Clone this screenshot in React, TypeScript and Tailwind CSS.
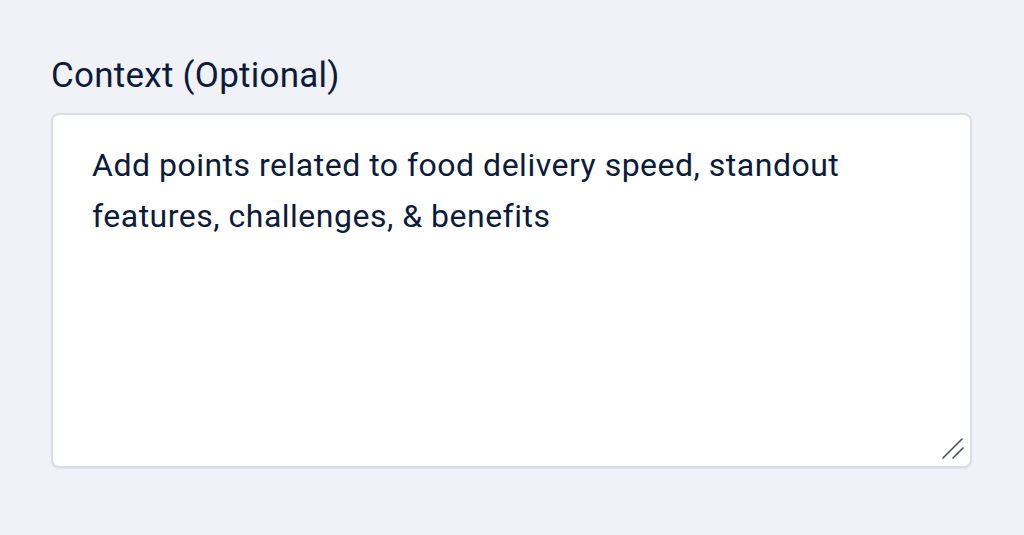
export default function App() {
  return (
    <div className="min-h-[535px] w-full bg-[#f1f2f8] px-[51px] pt-[56px] font-['Roboto',sans-serif]">
      <label
        htmlFor="context"
        className="block text-[35px] leading-[40px] font-normal tracking-[0.25px] text-[#0c1b3a]"
      >
        Context (Optional)
      </label>
      <div className="relative mt-[17px] w-[921px]">
        <textarea
          id="context"
          defaultValue="Add points related to food delivery speed, standout features, challenges, & benefits"
          className="block h-[355px] w-full resize-none rounded-[8px] border-2 border-[#dcdde3] bg-white pl-[39px] pr-[39px] pt-[25px] text-[32px] leading-[51px] tracking-[0.5px] text-[#0c1b3a] shadow-[0_1px_2px_rgba(0,0,0,0.06)] outline-none font-['Roboto',sans-serif]"
        />
        <svg
          className="pointer-events-none absolute right-[8px] bottom-[8px]"
          width="24"
          height="24"
          viewBox="0 0 24 24"
          fill="none"
          stroke="#4b4d55"
          strokeWidth="1.6"
          strokeLinecap="round"
        >
          <line x1="3" y1="22" x2="22" y2="3" />
          <line x1="13" y1="22" x2="23" y2="12" />
        </svg>
      </div>
    </div>
  );
}
